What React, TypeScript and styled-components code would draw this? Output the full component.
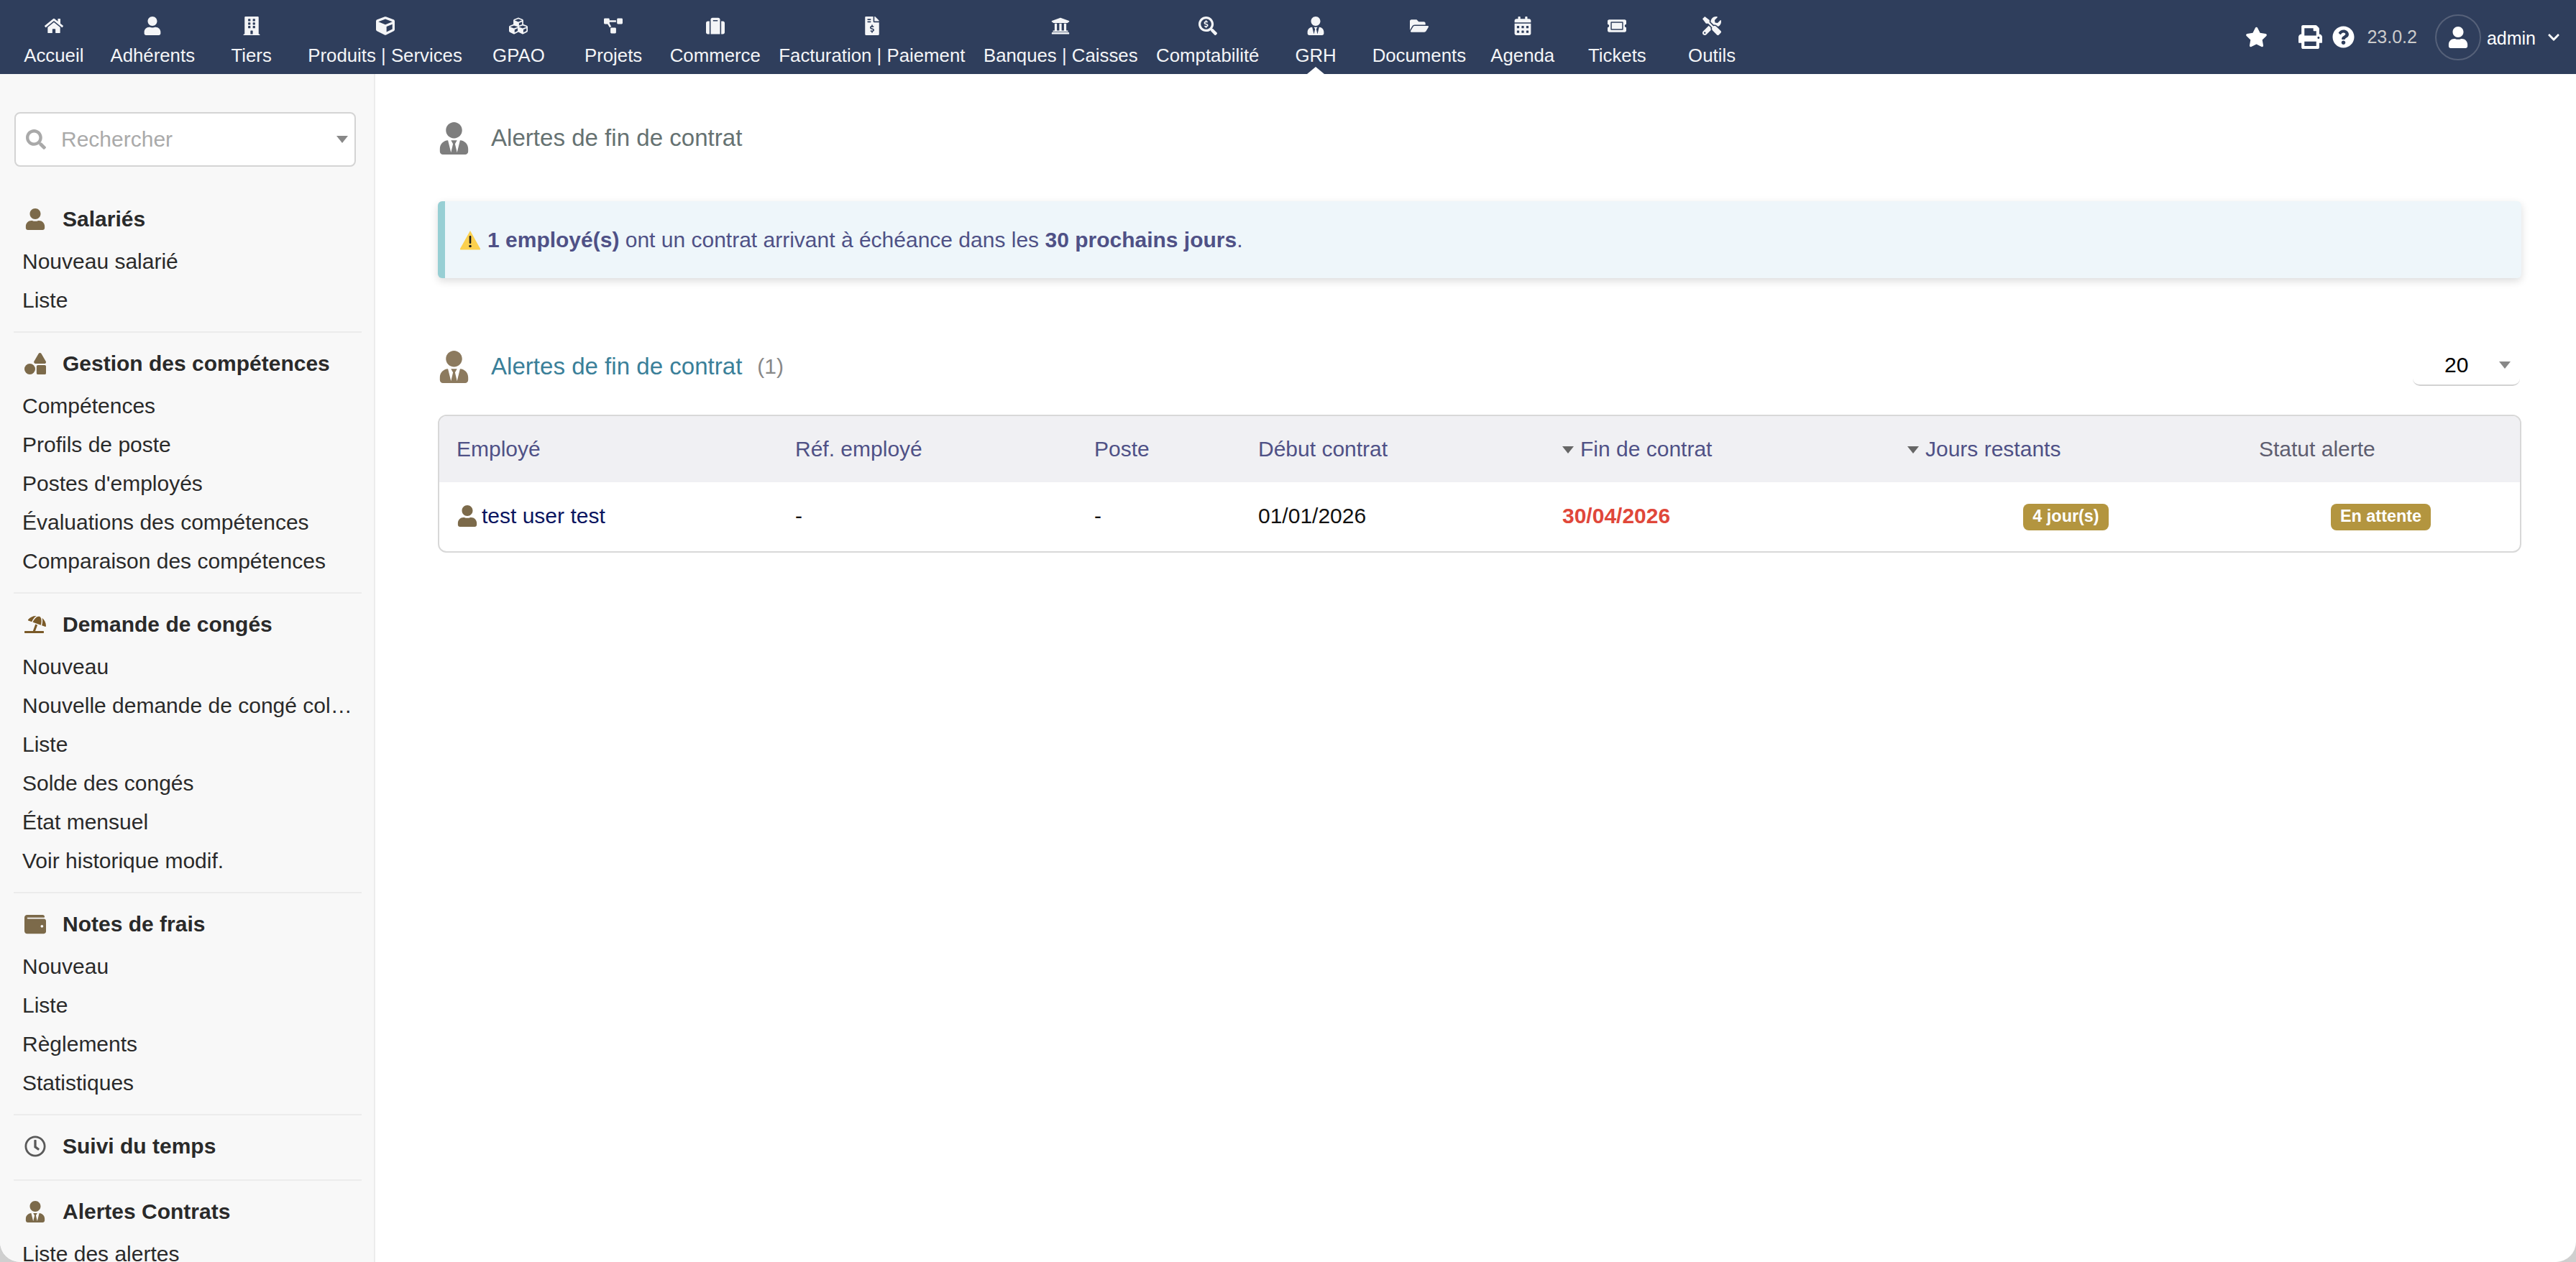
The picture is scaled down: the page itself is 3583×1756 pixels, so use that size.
import React from 'react';
import styled, { createGlobalStyle } from 'styled-components';
import {
  FaBuilding,
  FaCalendarAlt,
  FaChevronDown,
  FaCube,
  FaCubes,
  FaFileInvoiceDollar,
  FaFolderOpen,
  FaHome,
  FaPrint,
  FaProjectDiagram,
  FaQuestionCircle,
  FaRegClock,
  FaSearch,
  FaSearchDollar,
  FaShapes,
  FaStar,
  FaSuitcase,
  FaTicketAlt,
  FaTools,
  FaUmbrellaBeach,
  FaUniversity,
  FaUser,
  FaUserTie,
  FaWallet,
} from 'react-icons/fa';

const GlobalStyle = createGlobalStyle`
  html, body {
    margin: 0;
    padding: 0;
    height: 100%;
    background: #cfcfcf;
    overflow: hidden;
    font-family: "Liberation Sans", Arial, sans-serif;
  }
  * {
    box-sizing: border-box;
  }
`;

const StyledWindow = styled.div`
  width: 100%;
  height: 100vh;
  display: flex;
  flex-direction: column;
  background: #fff;
  border-radius: 0 0 28px 28px;
  overflow: hidden;
`;

const StyledTopBar = styled.header`
  flex: 0 0 103px;
  display: flex;
  align-items: stretch;
  padding: 0 22px 0 9px;
  background: #2f3e5c;
  color: #f4f5f7;
`;

const StyledNavItem = styled.div<{ $active?: boolean }>`
  position: relative;
  min-width: 131.7px;
  padding: 22px 12.75px 0;
  display: flex;
  flex-direction: column;
  align-items: center;
  font-size: 25.8px;
  white-space: nowrap;

  &::after {
    content: '';
    display: ${(p) => (p.$active ? 'block' : 'none')};
    position: absolute;
    left: 50%;
    bottom: 0;
    margin-left: -12px;
    border-left: 12px solid transparent;
    border-right: 12px solid transparent;
    border-bottom: 10px solid #fff;
  }
`;

const StyledNavIcon = styled.div`
  height: 27px;
  display: flex;
  align-items: center;
  justify-content: center;
  font-size: 26px;
`;

const StyledNavLabel = styled.div`
  margin-top: 13px;
  line-height: 30px;
`;

const StyledTools = styled.div`
  margin-left: auto;
  display: flex;
  align-items: center;
  color: #fff;
`;

const StyledTool = styled.span<{ $gap: number; $size: number }>`
  display: flex;
  margin-left: ${(p) => p.$gap}px;
  font-size: ${(p) => p.$size}px;
`;

const StyledVersion = styled.span`
  margin-left: 17px;
  font-size: 25px;
  color: #ccc;
`;

const StyledAvatar = styled.span`
  margin-left: 25px;
  width: 64px;
  height: 64px;
  border: 2px solid #566179;
  border-radius: 50%;
  display: flex;
  align-items: center;
  justify-content: center;
  font-size: 30px;
`;

const StyledUserName = styled.span`
  margin-left: 8px;
  margin-top: 3px;
  font-size: 25px;
`;

const StyledBody = styled.div`
  flex: 1;
  min-height: 0;
  display: flex;
`;

const StyledSidebar = styled.aside`
  flex: 0 0 522px;
  padding-top: 53px;
  background: #f8f8f8;
  border-right: 2px solid #ececec;
  overflow: hidden;
  color: #2a2a2a;
  font-size: 30px;
`;

const StyledSearch = styled.div`
  margin: 0 25px 46px 20px;
  height: 76px;
  padding: 0 9px 0 14px;
  display: flex;
  align-items: center;
  background: #fff;
  border: 2px solid #d4d4d4;
  border-radius: 8px;
  color: #aaa;
`;

const StyledSearchIcon = styled(FaSearch)`
  font-size: 28px;
  color: #a9a9a9;
  margin-right: 21px;
`;

const StyledArrow = styled.span<{ $color: string }>`
  flex: none;
  width: 0;
  height: 0;
  border-left: 8px solid transparent;
  border-right: 8px solid transparent;
  border-top: 10px solid ${(p) => p.$color};
`;

const StyledSearchArrow = styled(StyledArrow)`
  margin-left: auto;
`;

const StyledSection = styled.section<{ $plain?: boolean }>`
  margin: 0 17px 16px 19px;
  padding-bottom: ${(p) => (p.$plain ? 14 : 16)}px;
  border-bottom: 2px solid #ececec;

  &:last-child {
    border-bottom: 0;
  }
`;

const StyledSectionTitle = styled.div`
  height: 54px;
  margin-bottom: 5px;
  padding-left: 15px;
  display: flex;
  align-items: center;
  font-weight: bold;
`;

const StyledSectionIcon = styled.span<{ $color: string }>`
  flex: 0 0 53px;
  display: flex;
  font-size: 30px;
  color: ${(p) => p.$color};
`;

const StyledSectionItem = styled.div`
  height: 54px;
  line-height: 54px;
  padding: 0 8px 0 12px;
  white-space: nowrap;
  overflow: hidden;
  text-overflow: ellipsis;
`;

const StyledMain = styled.main`
  flex: 1;
  min-width: 0;
  padding: 66px 76px 0 87px;
`;

const StyledTitleRow = styled.div<{ $top?: number; $bottom: number }>`
  height: 46px;
  margin-top: ${(p) => p.$top || 0}px;
  margin-bottom: ${(p) => p.$bottom}px;
  display: flex;
  align-items: center;
`;

const StyledTitleIcon = styled(FaUserTie)<{ $color: string }>`
  flex: none;
  font-size: 45px;
  color: ${(p) => p.$color};
  margin-right: 29px;
`;

const StyledTitle = styled.div<{ $color: string }>`
  font-size: 33.1px;
  color: ${(p) => p.$color};
`;

const StyledCount = styled.span`
  margin-left: 21px;
  font-size: 30px;
  color: #888;
`;

const StyledLimit = styled.div`
  margin-left: auto;
  margin-right: 2px;
  width: 149px;
  height: 54px;
  padding: 0 13px 2px 44px;
  display: flex;
  align-items: center;
  justify-content: space-between;
  border-bottom: 2px solid #d2d2d2;
  border-radius: 0 0 10px 10px;
  font-size: 30px;
  color: #000;
`;

const StyledAlert = styled.div`
  height: 107px;
  padding-left: 20px;
  display: flex;
  align-items: center;
  background: #eef6fa;
  border-left: 10px solid #97cfd4;
  border-radius: 6px;
  box-shadow: 0 4px 12px rgba(0, 0, 0, 0.14);
  font-size: 30px;
  color: #4f5186;
`;

const StyledWarning = styled.svg`
  flex: none;
  width: 30px;
  height: 28px;
  margin-right: 9px;
`;

const StyledTableFrame = styled.div`
  border: 2px solid #d8d8d8;
  border-radius: 12px;
  overflow: hidden;
`;

const StyledTable = styled.table`
  width: 100%;
  table-layout: fixed;
  border-collapse: collapse;
  font-size: 30px;
`;

const StyledHeadCell = styled.th<{ $width?: number; $grey?: boolean }>`
  width: ${(p) => (p.$width ? `${p.$width}px` : 'auto')};
  height: 92px;
  padding: 0 0 1px 24px;
  background: #f0f0f3;
  font-weight: normal;
  text-align: left;
  color: ${(p) => (p.$grey ? '#5e5e70' : '#4f5186')};
`;

const StyledSortArrow = styled(StyledArrow)`
  display: inline-block;
  margin-right: 9px;
  vertical-align: 4px;
`;

const StyledCell = styled.td<{ $center?: boolean; $danger?: boolean }>`
  height: 96px;
  padding: 0 0 2px ${(p) => (p.$center ? 0 : 24)}px;
  text-align: ${(p) => (p.$center ? 'center' : 'left')};
  color: ${(p) => (p.$danger ? '#e0473a' : '#111')};
  font-weight: ${(p) => (p.$danger ? 'bold' : 'normal')};
`;

const StyledUserLink = styled.a`
  display: flex;
  align-items: center;
  color: #0a1560;
`;

const StyledUserIcon = styled(FaUser)`
  font-size: 30px;
  color: #7c6a4a;
  margin-right: 5px;
`;

const StyledBadge = styled.span`
  display: inline-block;
  height: 37px;
  line-height: 35px;
  padding: 0 13px;
  margin-top: 2px;
  background: #b3953f;
  border-radius: 8px;
  color: #fff;
  font-size: 23.4px;
  font-weight: bold;
`;

const navItems = [
  { label: 'Accueil', icon: <FaHome /> },
  { label: 'Adhérents', icon: <FaUser /> },
  { label: 'Tiers', icon: <FaBuilding /> },
  { label: 'Produits | Services', icon: <FaCube /> },
  { label: 'GPAO', icon: <FaCubes /> },
  { label: 'Projets', icon: <FaProjectDiagram /> },
  { label: 'Commerce', icon: <FaSuitcase /> },
  { label: 'Facturation | Paiement', icon: <FaFileInvoiceDollar /> },
  { label: 'Banques | Caisses', icon: <FaUniversity /> },
  { label: 'Comptabilité', icon: <FaSearchDollar /> },
  { label: 'GRH', icon: <FaUserTie />, active: true },
  { label: 'Documents', icon: <FaFolderOpen /> },
  { label: 'Agenda', icon: <FaCalendarAlt /> },
  { label: 'Tickets', icon: <FaTicketAlt /> },
  { label: 'Outils', icon: <FaTools /> },
];

const sections = [
  {
    title: 'Salariés',
    icon: <FaUser />,
    color: '#7c6a4a',
    items: ['Nouveau salarié', 'Liste'],
  },
  {
    title: 'Gestion des compétences',
    icon: <FaShapes />,
    color: '#7c6a4a',
    items: [
      'Compétences',
      'Profils de poste',
      "Postes d'employés",
      'Évaluations des compétences',
      'Comparaison des compétences',
    ],
  },
  {
    title: 'Demande de congés',
    icon: <FaUmbrellaBeach />,
    color: '#7a5a28',
    items: [
      'Nouveau',
      'Nouvelle demande de congé collective',
      'Liste',
      'Solde des congés',
      'État mensuel',
      'Voir historique modif.',
    ],
  },
  {
    title: 'Notes de frais',
    icon: <FaWallet />,
    color: '#7c6a4a',
    items: ['Nouveau', 'Liste', 'Règlements', 'Statistiques'],
  },
  {
    title: 'Suivi du temps',
    icon: <FaRegClock />,
    color: '#5a5a5a',
    items: [],
  },
  {
    title: 'Alertes Contrats',
    icon: <FaUserTie />,
    color: '#7c6a4a',
    items: ['Liste des alertes'],
  },
];

const App: React.FC = () => (
  <StyledWindow>
    <GlobalStyle />
    <StyledTopBar>
      {navItems.map((item) => (
        <StyledNavItem key={item.label} $active={item.active}>
          <StyledNavIcon>{item.icon}</StyledNavIcon>
          <StyledNavLabel>{item.label}</StyledNavLabel>
        </StyledNavItem>
      ))}
      <StyledTools>
        <StyledTool $gap={0} $size={31}>
          <FaStar />
        </StyledTool>
        <StyledTool $gap={43} $size={33}>
          <FaPrint />
        </StyledTool>
        <StyledTool $gap={14} $size={31}>
          <FaQuestionCircle />
        </StyledTool>
        <StyledVersion>23.0.2</StyledVersion>
        <StyledAvatar>
          <FaUser />
        </StyledAvatar>
        <StyledUserName>admin</StyledUserName>
        <StyledTool $gap={16} $size={18}>
          <FaChevronDown />
        </StyledTool>
      </StyledTools>
    </StyledTopBar>
    <StyledBody>
      <StyledSidebar>
        <StyledSearch>
          <StyledSearchIcon />
          Rechercher
          <StyledSearchArrow $color="#888" />
        </StyledSearch>
        {sections.map((section) => (
          <StyledSection key={section.title} $plain={!section.items.length}>
            <StyledSectionTitle>
              <StyledSectionIcon $color={section.color}>
                {section.icon}
              </StyledSectionIcon>
              {section.title}
            </StyledSectionTitle>
            {section.items.map((item) => (
              <StyledSectionItem key={item}>{item}</StyledSectionItem>
            ))}
          </StyledSection>
        ))}
      </StyledSidebar>
      <StyledMain>
        <StyledTitleRow $bottom={65}>
          <StyledTitleIcon $color="#7e7e7e" />
          <StyledTitle $color="#667272">Alertes de fin de contrat</StyledTitle>
        </StyledTitleRow>
        <StyledAlert>
          <StyledWarning viewBox="0 0 30 28">
            <path
              d="M15 1 L29 26 Q29.5 27.5 28 27.5 L2 27.5 Q0.5 27.5 1 26 Z"
              fill="#fbd04e"
            />
            <rect x="13.7" y="8" width="2.6" height="11" rx="1.2" fill="#1c1c1c" />
            <circle cx="15" cy="22.5" r="1.8" fill="#1c1c1c" />
          </StyledWarning>
          <span>
            <b>1 employé(s)</b> ont un contrat arrivant à échéance dans les{' '}
            <b>30 prochains jours</b>.
          </span>
        </StyledAlert>
        <StyledTitleRow $top={100} $bottom={44}>
          <StyledTitleIcon $color="#8c7a5e" />
          <StyledTitle $color="#3a7f99">Alertes de fin de contrat</StyledTitle>
          <StyledCount>(1)</StyledCount>
          <StyledLimit>
            20
            <StyledArrow $color="#888" />
          </StyledLimit>
        </StyledTitleRow>
        <StyledTableFrame>
          <StyledTable>
            <thead>
              <tr>
                <StyledHeadCell $width={471}>Employé</StyledHeadCell>
                <StyledHeadCell $width={416}>Réf. employé</StyledHeadCell>
                <StyledHeadCell $width={228}>Poste</StyledHeadCell>
                <StyledHeadCell $width={423}>Début contrat</StyledHeadCell>
                <StyledHeadCell $width={480}>
                  <StyledSortArrow $color="#666" />
                  Fin de contrat
                </StyledHeadCell>
                <StyledHeadCell $width={489}>
                  <StyledSortArrow $color="#666" />
                  Jours restants
                </StyledHeadCell>
                <StyledHeadCell $grey>Statut alerte</StyledHeadCell>
              </tr>
            </thead>
            <tbody>
              <tr>
                <StyledCell>
                  <StyledUserLink>
                    <StyledUserIcon />
                    test user test
                  </StyledUserLink>
                </StyledCell>
                <StyledCell>-</StyledCell>
                <StyledCell>-</StyledCell>
                <StyledCell>01/01/2026</StyledCell>
                <StyledCell $danger>30/04/2026</StyledCell>
                <StyledCell $center>
                  <StyledBadge>4 jour(s)</StyledBadge>
                </StyledCell>
                <StyledCell $center>
                  <StyledBadge>En attente</StyledBadge>
                </StyledCell>
              </tr>
            </tbody>
          </StyledTable>
        </StyledTableFrame>
      </StyledMain>
    </StyledBody>
  </StyledWindow>
);

export default App;
